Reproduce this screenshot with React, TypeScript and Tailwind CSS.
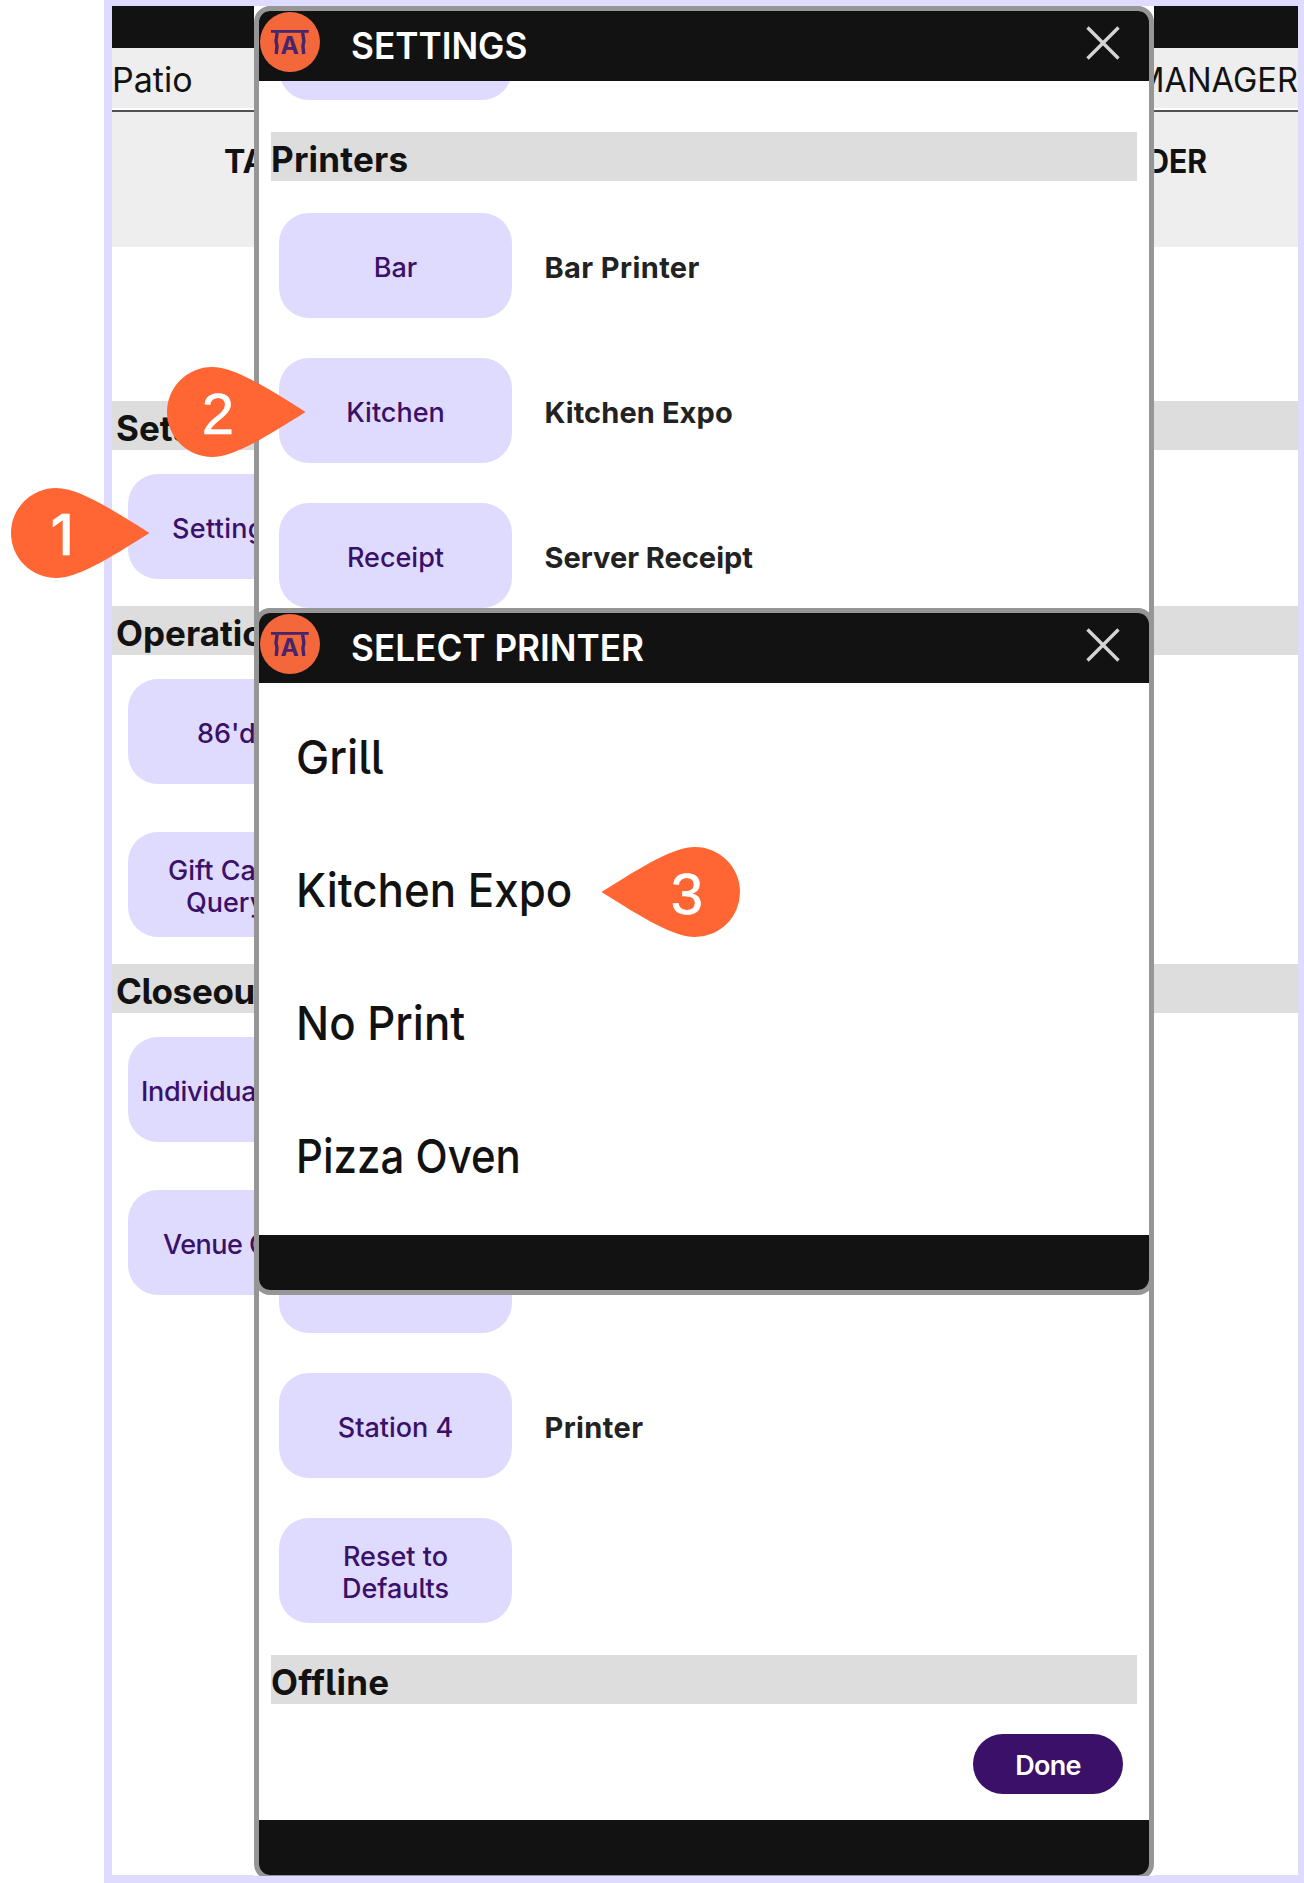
import React from "react";

function Logo() {
  return (
    <svg width="60" height="60" viewBox="0 0 60 60" className="ml-px mb-[8px] shrink-0">
      <circle cx="30" cy="30" r="30" fill="#f4673a" />
      <rect x="11" y="18" width="37.7" height="2.8" fill="#47256b" />
      <path d="M17.2 20.5 L16 29 L17 34 L16.2 42" fill="none" stroke="#47256b" strokeWidth="3.4" />
      <path d="M42.6 20.5 L43.9 29 L42.9 34 L43.8 42" fill="none" stroke="#47256b" strokeWidth="3.4" />
      <text x="29.7" y="42" textAnchor="middle" fontSize="24.5" fontWeight="700" fill="#47256b">
        A
      </text>
    </svg>
  );
}

function DialogHeader({ title }: { title: string }) {
  return (
    <div className="flex h-[70px] shrink-0 items-center bg-[#121212]">
      <Logo />
      <span className="mb-[2px] ml-[31px] grow origin-left scale-x-[0.951] whitespace-nowrap text-[37px] font-semibold leading-none text-white">
        {title}
      </span>
      <svg width="36" height="36" viewBox="0 0 36 36" className="mr-[28px] mb-[6px] shrink-0">
        <path d="M2.5 2.5 L33.5 33.5 M33.5 2.5 L2.5 33.5" stroke="#d4d4d4" strokeWidth="3.4" />
      </svg>
    </div>
  );
}

function PillButton({ children }: { children?: React.ReactNode }) {
  return (
    <div className="flex h-[105px] w-[233px] shrink-0 items-center justify-center rounded-[30px] bg-[#dfdbfe] pt-[4px] text-center text-[27px] font-medium leading-[32px] text-[#3b1068]">
      {children}
    </div>
  );
}

function PrinterRow({ name, value, track }: { name: React.ReactNode; value?: string; track?: string }) {
  return (
    <div className="mb-[40px] ml-[20px] flex items-center">
      <PillButton>{name}</PillButton>
      {value && (
        <span className={`ml-[32.5px] pt-[3px] text-[29px] font-bold leading-none text-[#222222] ${track ?? ""}`}>
          {value}
        </span>
      )}
    </div>
  );
}

function SectionBar({ children, className = "" }: { children: React.ReactNode; className?: string }) {
  return (
    <div
      className={`flex h-[49px] shrink-0 items-center bg-[#dddddd] pt-[5px] text-[35px] font-bold leading-none text-[#121212] ${className}`}
    >
      {children}
    </div>
  );
}

function SideButton({ children, pad }: { children: React.ReactNode; pad: string }) {
  return (
    <div
      className={`ml-[16px] flex h-[105px] w-[126px] flex-col justify-center overflow-hidden whitespace-nowrap rounded-l-[30px] bg-[#dfdbfe] pt-[4px] text-[27px] font-medium leading-[32px] text-[#3b1068] ${pad}`}
    >
      {children}
    </div>
  );
}

function Marker({ n, className, left = false }: { n: string; className: string; left?: boolean }) {
  return (
    <svg width="139" height="90" viewBox="0 0 139 90" className={`absolute ${className}`}>
      <path
        d="M45 0 C66 0 95 17.5 138.5 45 C95 72.5 66 90 45 90 A45 45 0 0 1 45 0 Z"
        transform={left ? "translate(139 0) scale(-1 1)" : undefined}
        fill="#ff6633"
      />
      <text
        x={left ? 86 : 51}
        y="66.5"
        textAnchor="middle"
        fontSize={n === "1" ? 56 : 58}
        fontWeight={n === "1" ? 500 : 400}
        fill="white"
        className={n === "1" ? "font-['Inter',sans-serif]" : "font-['Liberation_Sans',sans-serif]"}
        stroke="white"
        strokeWidth="0.6"
      >
        {n}
      </text>
    </svg>
  );
}

export default function App() {
  return (
    <div className="relative h-[1883px] w-[1304px] overflow-hidden bg-white font-['Inter',sans-serif] text-[#121212] [font-feature-settings:'cv05']">
      <div className="ml-[104px] h-[1883px] w-[1200px] border-x-8 border-t-[6px] border-b-8 border-[#dfdbfe] border-r-[6px]">
        <div className="h-[42px] bg-[#121212]" />
        <div className="flex h-[62px] items-center justify-between border-b-2 border-white bg-[#eeeeee] pt-[4px] text-[34px] leading-none">
          <span>Patio</span>
          <span className="flex w-[150px] origin-right scale-x-[0.96] justify-end overflow-hidden leading-[40px]">MANAGER</span>
        </div>
        <div className="flex h-[137px] justify-between border-t-2 border-[#505055] bg-[#eeeeee] pt-[34px] text-[32px] font-bold leading-[32px]">
          <span className="w-[142px] overflow-hidden pl-[112px]">TABLE</span>
          <span className="mr-[91px] flex w-[56px] origin-right scale-x-[0.94] justify-end overflow-hidden">ORDER</span>
        </div>
        <SectionBar className="mt-[154px] pl-[4px]">
          <span className="w-[138px] overflow-hidden leading-[44px]">Settings</span>
        </SectionBar>
        <div className="mt-[24px]">
          <SideButton pad="pl-[44px] tracking-[0.3px]">Settings</SideButton>
        </div>
        <SectionBar className="mt-[27px] pl-[4px]">
          <span className="w-[138px] overflow-hidden leading-[44px]">Operations</span>
        </SectionBar>
        <div className="mt-[24px] flex flex-col gap-[48px]">
          <SideButton pad="pl-[69px]">86'd</SideButton>
          <SideButton pad="pl-[40px]">
            <span>Gift Card</span>
            <span className="pl-[18px]">Query</span>
          </SideButton>
        </div>
        <SectionBar className="mt-[27px] pl-[4px]">
          <span className="w-[138px] overflow-hidden leading-[44px] tracking-[-0.3px]">Closeout</span>
        </SectionBar>
        <div className="mt-[24px] flex flex-col gap-[48px]">
          <SideButton pad="pl-[13px] tracking-[-0.25px]">Individual</SideButton>
          <SideButton pad="pl-[35px] tracking-[-0.5px]">Venue Closeout</SideButton>
        </div>
      </div>

      <div className="absolute left-[254px] top-[6px] h-[1870px] w-[900px] overflow-hidden bg-white">
        <div className="flex h-[1874px] flex-col overflow-hidden rounded-[16px] border-[5px] border-[#979696] bg-white">
          <DialogHeader title="SETTINGS" />
          <div className="flex h-[1739px] shrink-0 flex-col overflow-hidden">
            <div className="ml-[20px] mt-[-86px]">
              <PillButton />
            </div>
            <SectionBar className="ml-[12px] mr-[12px] mt-[32px] tracking-[0.2px]">Printers</SectionBar>
            <div className="mt-[32px]">
              <PrinterRow name="Bar" value="Bar Printer" track="tracking-[0.4px]" />
              <PrinterRow name="Kitchen" value="Kitchen Expo" track="tracking-[0.1px]" />
              <PrinterRow name="Receipt" value="Server Receipt" />
            </div>
            <div className="mt-[580px]">
              <PrinterRow name="" />
              <PrinterRow name="Station 4" value="Printer" track="tracking-[0.4px]" />
              <PrinterRow
                name={
                  <>
                    Reset to
                    <br />
                    Defaults
                  </>
                }
              />
            </div>
            <SectionBar className="ml-[12px] mr-[12px] mt-[-8px] tracking-[0.3px]">Offline</SectionBar>
            <div className="mr-[26px] mt-[30px] flex h-[60px] w-[150px] items-center justify-center self-end rounded-full bg-[#3b1068] pt-[3px] text-[27px] font-semibold leading-none tracking-[-0.7px] text-white">
              Done
            </div>
          </div>
          <div className="h-[55px] shrink-0 bg-[#121212]" />
        </div>
      </div>

      <div className="absolute left-[254px] top-[608px] flex h-[687px] w-[900px] flex-col overflow-hidden rounded-[16px] border-[5px] border-[#979696] bg-white">
        <DialogHeader title="SELECT PRINTER" />
        <div className="flex h-[552px] shrink-0 flex-col pl-[37px] pt-[7px] text-[47px] font-medium leading-[133px]">
          <span className="origin-left scale-x-[0.945]">Grill</span>
          <span className="origin-left scale-x-[0.933]">Kitchen Expo</span>
          <span className="origin-left scale-x-[0.932]">No Print</span>
          <span className="origin-left scale-x-[0.893]">Pizza Oven</span>
        </div>
        <div className="h-[55px] shrink-0 bg-[#121212]" />
      </div>

      <Marker n="1" className="left-[10.5px] top-[488px]" />
      <Marker n="2" className="left-[167px] top-[367px]" />
      <Marker n="3" className="left-[600.5px] top-[847px]" left />
    </div>
  );
}
